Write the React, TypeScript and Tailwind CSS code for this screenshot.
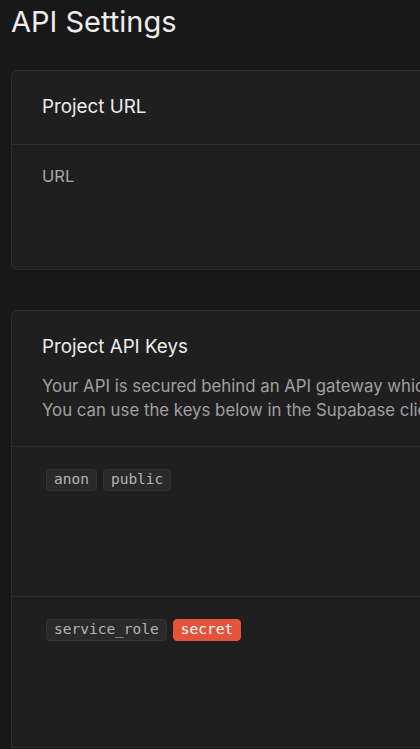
import type { ReactNode } from "react";

function Badge({ children, danger }: { children: ReactNode; danger?: boolean }) {
  return (
    <span
      className={
        danger
          ? "inline-flex h-[22px] items-center rounded-[4px] border border-[#e5533a] bg-[#e5533a] px-[7px] text-[14.5px] text-white"
          : "inline-flex h-[22px] items-center rounded-[4px] border border-[#343434] bg-[#2a2a2a] px-[7px] text-[14.5px] text-[#b4b4b4]"
      }
      style={{ fontFamily: '"DejaVu Sans Mono", monospace' }}
    >
      {children}
    </span>
  );
}

function KeyRow({ children, last }: { children: ReactNode; last?: boolean }) {
  return (
    <div className={"h-[150px] pl-[34px] pt-[22px] " + (last ? "" : "border-b border-[#2e2e2e]")}>
      <div className="flex gap-[6px]">{children}</div>
    </div>
  );
}

export default function App() {
  return (
    <div className="min-h-screen w-[420px] overflow-hidden bg-[#181818] px-[11px] pt-[4px]" style={{ fontFamily: "Inter, sans-serif" }}>
      <h1 className="text-[29px] leading-[36px] text-[#ededed]">API Settings</h1>

      <div className="mt-[30px] w-[900px] rounded-[6px] border border-[#2e2e2e] bg-[#1f1f1f]">
        <div className="h-[74px] border-b border-[#2e2e2e] px-[30px] pt-[23px]">
          <h2 className="text-[18.8px] leading-[26px] text-[#ededed]">Project URL</h2>
        </div>
        <div className="h-[124px] px-[30px] pt-[21px]">
          <p className="text-[16.5px] leading-[20px] text-[#a8a8a8]">URL</p>
        </div>
      </div>

      <div className="mt-[40px] w-[900px] rounded-t-[6px] border border-[#2e2e2e] bg-[#1f1f1f]">
        <div className="h-[136px] border-b border-[#2e2e2e] px-[30px] pt-[23px]">
          <h2 className="text-[18.8px] leading-[26px] text-[#ededed]">Project API Keys</h2>
          <p className="mt-[14px] whitespace-nowrap text-[16.8px] leading-[24px] text-[#a0a0a0]">
            Your API is secured behind an API gateway which requires an API Key for every request.
            <br />
            You can use the keys below in the Supabase client libraries.
          </p>
        </div>
        <KeyRow>
          <Badge>anon</Badge>
          <Badge>public</Badge>
        </KeyRow>
        <KeyRow last>
          <Badge>service_role</Badge>
          <Badge danger>secret</Badge>
        </KeyRow>
      </div>
    </div>
  );
}
